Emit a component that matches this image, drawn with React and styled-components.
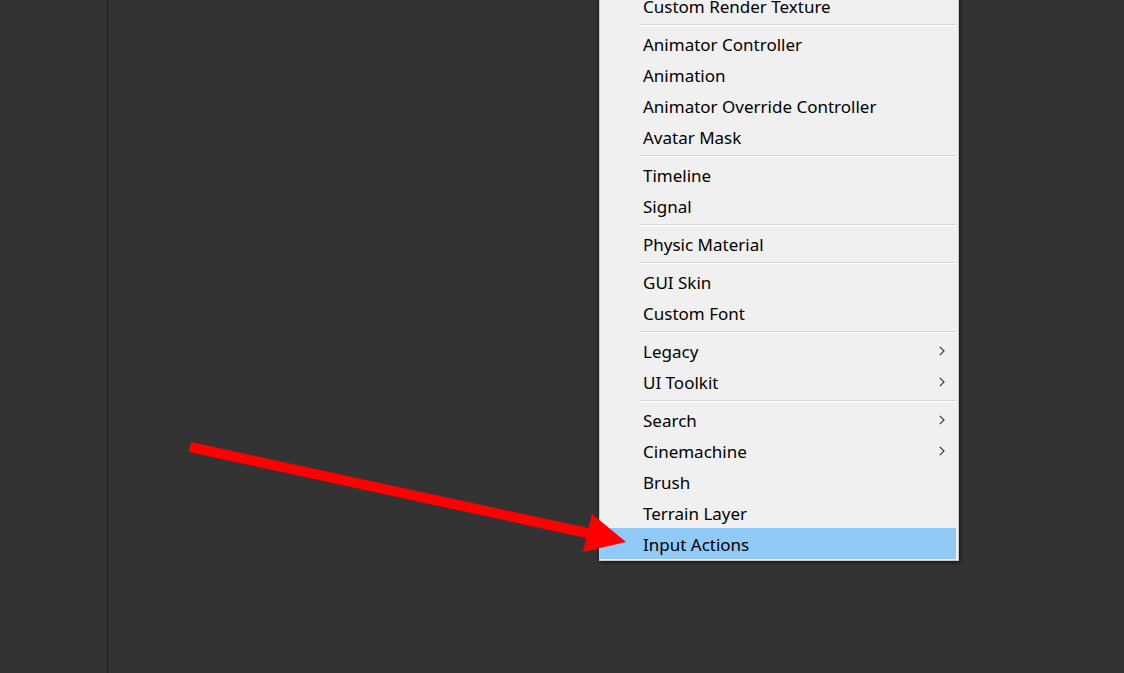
import React from "react";
import styled, { createGlobalStyle } from "styled-components";

const Global = createGlobalStyle`
  html, body { margin: 0; padding: 0; background: #333333; overflow: hidden; }
  #root { width: 1124px; height: 673px; }
`;

const Page = styled.div`
  position: relative;
  width: 1124px;
  height: 673px;
  display: flex;
  background: #333333;
  overflow: hidden;
`;

const SidePanel = styled.div`
  width: 107px;
  height: 100%;
  background: #333333;
  border-right: 1px solid #1c1c1c;
  flex: none;
`;

const Viewport = styled.div`
  flex: 1;
  height: 100%;
  background: #333333;
`;

const Menu = styled.div`
  position: absolute;
  left: 599px;
  top: -14px;
  width: 356px;
  padding: 3px 2px 1px 0;
  background: #f0f0f0;
  border: 1px solid #c8c8c8;
  box-shadow: 2px 2px 3px rgba(0, 0, 0, 0.45), -2px 0 3px rgba(0, 0, 0, 0.2);
  font-family: "Noto Sans", "Noto Sans CJK KR", sans-serif;
  font-size: 17px;
  color: #000;
`;

const Item = styled.div`
  height: 31px;
  display: flex;
  align-items: center;
  justify-content: space-between;
  padding: 2px 11px 0 43px;
  box-sizing: border-box;
  background: ${(p) => (p.$active ? "#91c9f7" : "transparent")};
  white-space: nowrap;
`;

const Separator = styled.div`
  height: 7px;
  box-sizing: border-box;
  padding-top: 3px;
  margin-left: 40px;
  &::before {
    content: "";
    display: block;
    height: 1px;
    background: #d7d7d7;
    border-bottom: 1px solid #ffffff;
  }
`;

const Chevron = () => (
  <svg width="6" height="10" viewBox="0 0 6 10" style={{ marginTop: -2 }}>
    <polyline points="0.8,0.8 5,5 0.8,9.2" fill="none" stroke="#3a3a3a" strokeWidth="1.2" />
  </svg>
);

const Overlay = styled.svg`
  position: absolute;
  left: 0;
  top: 0;
  pointer-events: none;
`;

const groups = [
  [{ t: "Custom Render Texture" }],
  [
    { t: "Animator Controller" },
    { t: "Animation" },
    { t: "Animator Override Controller" },
    { t: "Avatar Mask" },
  ],
  [{ t: "Timeline" }, { t: "Signal" }],
  [{ t: "Physic Material" }],
  [{ t: "GUI Skin" }, { t: "Custom Font" }],
  [
    { t: "Legacy", sub: true },
    { t: "UI Toolkit", sub: true },
  ],
  [
    { t: "Search", sub: true },
    { t: "Cinemachine", sub: true },
    { t: "Brush" },
    { t: "Terrain Layer" },
    { t: "Input Actions", active: true },
  ],
];

export default function App() {
  return (
    <Page>
      <Global />
      <SidePanel />
      <Viewport />
      <Menu>
        {groups.map((g, gi) => (
          <React.Fragment key={gi}>
            {gi > 0 && <Separator />}
            {g.map((it) => (
              <Item key={it.t} $active={it.active}>
                <span>{it.t}</span>
                {it.sub && <Chevron />}
              </Item>
            ))}
          </React.Fragment>
        ))}
      </Menu>
      <Overlay width="1124" height="673" viewBox="0 0 1124 673">
        <line x1="190" y1="447" x2="592" y2="534" stroke="#ff0000" strokeWidth="10" />
        <polygon points="592,514 626,542 583,552" fill="#ff0000" />
      </Overlay>
    </Page>
  );
}
